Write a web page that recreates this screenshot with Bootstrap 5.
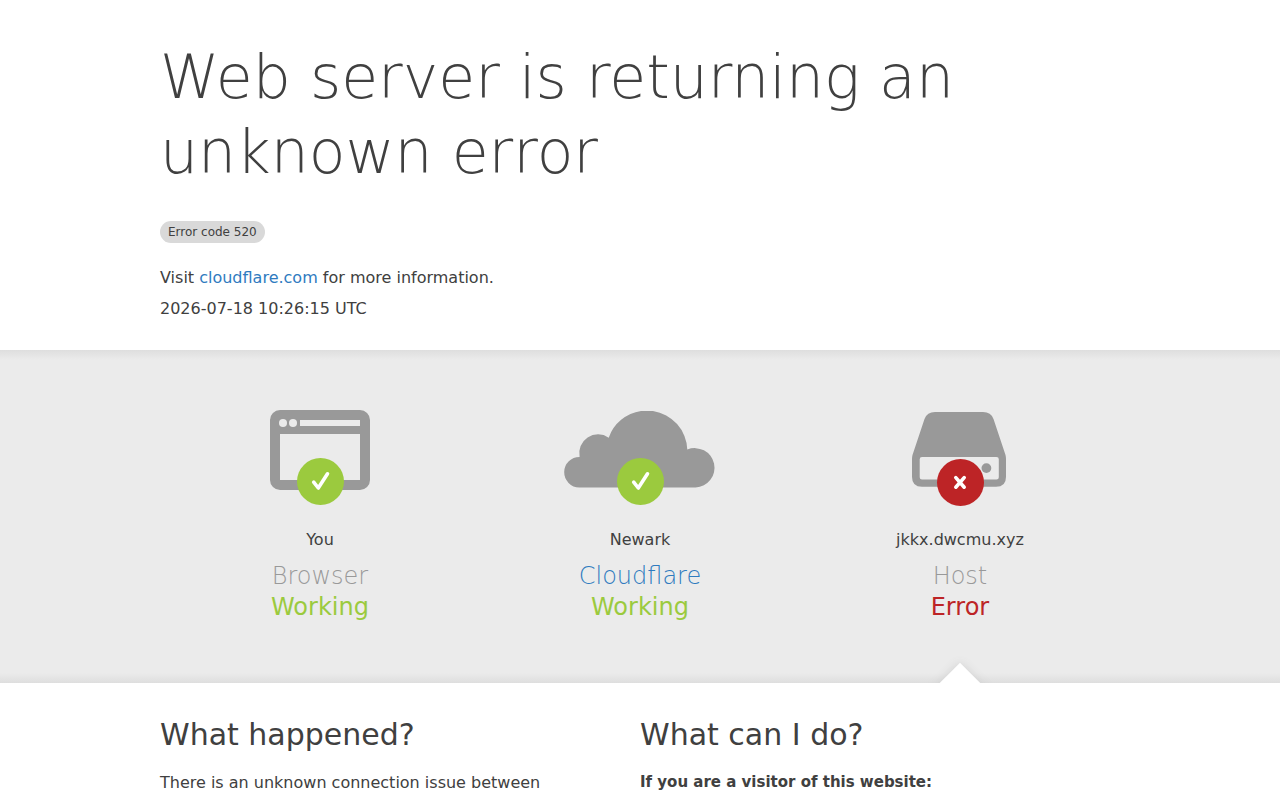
<!DOCTYPE html>
<html lang="en">
<head>
<meta charset="utf-8">
<meta name="viewport" content="width=device-width, initial-scale=1">
<title>520: Web server is returning an unknown error</title>
<link href="https://cdn.jsdelivr.net/npm/bootstrap@5.3.0/dist/css/bootstrap.min.css" rel="stylesheet">
<style>
  body { font-family: "DejaVu Sans", sans-serif; font-size: 16px; line-height: 24px; color: #404040; background: #fff; }
  a { color: #2f7bbf; text-decoration: none; }
  .wrap { width: 100%; max-width: 960px; margin: 0 auto; }
  .page-head { padding: 40px 0 29px; }
  .page-title { font-size: 60px; line-height: 75px; font-weight: 200; margin-bottom: 31px; }
  .code-pill { font-size: 12px; line-height: 18px; padding: 2px 8px; background: #d9d9d9; }
  .visit { margin: 23px 0 7px; }
  .status-band { padding-top: 60px; background: linear-gradient(to top, #dedede, #ebebeb 3%, #ebebeb 97%, #dedede); }
  .status-icon { width: 160px; height: 97px; }
  .status-place { margin: 21px 0 9px; }
  .status-label { font-size: 24px; line-height: 31px; margin: 0; }
  .thin { font-weight: 200; }
  .gray { color: #999; }
  .ok { color: #9bca3e; }
  .bad { color: #bd2426; }
  .pointer-slot { height: 60px; }
  .pointer { left: 50%; bottom: -28px; width: 40px; height: 40px; margin-left: -20px; background: #fff; transform: rotate(45deg); box-shadow: 0 0 10px #d0d0d0; }
  .topic { font-size: 30px; line-height: 39px; margin-bottom: 17px; }
  .audience { font-size: 15px; line-height: 22px; }
</style>
</head>
<body>
<header class="page-head">
  <div class="wrap">
    <h1 class="page-title">Web server is returning an unknown error</h1>
    <div class="d-flex"><span class="code-pill rounded-pill">Error code 520</span></div>
    <p class="visit">Visit <a href="https://www.cloudflare.com/">cloudflare.com</a> for more information.</p>
    <p class="mb-0">2026-07-18 10:26:15 UTC</p>
  </div>
</header>

<main>
  <section class="status-band overflow-hidden">
    <div class="wrap">
      <div class="row g-0 text-center">
        <div class="col-4">
          <svg class="status-icon d-block mx-auto" viewBox="0 0 160 97" aria-hidden="true">
            <path fill="#999" fill-rule="evenodd" d="M40 0h80a10 10 0 0 1 10 10v60a10 10 0 0 1-10 10H40a10 10 0 0 1-10-10V10A10 10 0 0 1 40 0zM40 24v46h80V24zM60 10v6h60v-6z"/>
            <circle cx="43" cy="13" r="4" fill="#ebebeb"/><circle cx="53" cy="13" r="4" fill="#ebebeb"/>
            <circle cx="80.500" cy="71.500" r="23.500" fill="#9bca3e"/>
            <path d="M73.700 72.200l4.600 5.800 9.200-14.200" fill="none" stroke="#fff" stroke-width="3.600" stroke-linecap="round" stroke-linejoin="round"/>
          </svg>
          <p class="status-place">You</p>
          <h2 class="status-label thin gray">Browser</h2>
          <p class="status-label ok">Working</p>
        </div>
        <div class="col-4">
          <svg class="status-icon d-block mx-auto" viewBox="0 0 160 97" aria-hidden="true">
            <path fill="#999" d="M19.300 77.500A15.200 15.200 0 0 1 19.600 47A18.800 18.800 0 0 1 48.700 27.700A40.500 40.500 0 0 1 81 1H93A40.500 40.500 0 0 1 127.300 39.600A19.700 19.700 0 1 1 135.600 77.500Z"/>
            <circle cx="80.500" cy="71.500" r="23.500" fill="#9bca3e"/>
            <path d="M73.700 72.200l4.600 5.800 9.200-14.200" fill="none" stroke="#fff" stroke-width="3.600" stroke-linecap="round" stroke-linejoin="round"/>
          </svg>
          <p class="status-place">Newark</p>
          <h2 class="status-label thin"><a href="https://www.cloudflare.com/">Cloudflare</a></h2>
          <p class="status-label ok">Working</p>
        </div>
        <div class="col-4">
          <svg class="status-icon d-block mx-auto" viewBox="0 0 160 97" aria-hidden="true">
            <path fill="#999" fill-rule="evenodd" d="M55 2H103Q111 2 113.500 9L125.500 45Q126 47 126 49V67Q126 76.800 116 76.800H42Q32 76.800 32 67V49Q32 47 32.500 45L44.500 9Q47 2 55 2ZM42 47q-2.300 0-2.300 2.300v18q0 2.300 2.300 2.300h74.500q2.300 0 2.300-2.300v-18q0-2.300-2.300-2.300z"/>
            <circle cx="106.400" cy="58.100" r="4.900" fill="#999"/>
            <circle cx="80.500" cy="72.500" r="23.500" fill="#bd2426"/>
            <path d="M75.800 67.600l8.400 9.600M84.200 67.600l-8.400 9.600" fill="none" stroke="#fff" stroke-width="3.600" stroke-linecap="round"/>
          </svg>
          <p class="status-place">jkkx.dwcmu.xyz</p>
          <h2 class="status-label thin gray">Host</h2>
          <p class="status-label bad">Error</p>
        </div>
      </div>
      <div class="row g-0">
        <div class="col-4 offset-8 position-relative pointer-slot">
          <span class="pointer position-absolute"></span>
        </div>
      </div>
    </div>
  </section>

  <section class="wrap pt-3">
    <div class="row g-0 pt-3">
      <div class="col-6 pe-5">
        <h2 class="topic">What happened?</h2>
        <p>There is an unknown connection issue between</p>
      </div>
      <div class="col-6">
        <h2 class="topic">What can I do?</h2>
        <h3 class="audience fw-bold">If you are a visitor of this website:</h3>
      </div>
    </div>
  </section>
</main>
<script src="https://cdn.jsdelivr.net/npm/bootstrap@5.3.0/dist/js/bootstrap.bundle.min.js"></script>
</body>
</html>
